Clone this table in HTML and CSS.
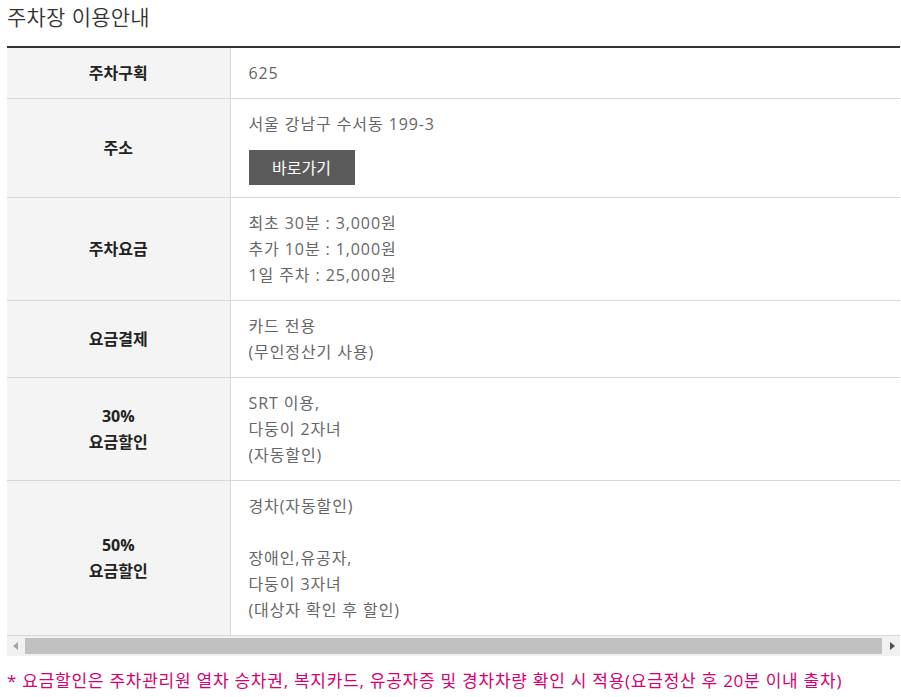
FILE: index.html
```html
<!DOCTYPE html>
<html lang="ko">
	<head>
		<meta charset="UTF-8">
		<meta name="viewport" content="width=device-width, initial-scale=1.0">
		<title>주차장 이용안내</title>
		<link rel="stylesheet" href="styles.css">
	</head>

	<body>
		<div class="wrap">
			<h1 class="page-title">주차장 이용안내</h1>

			<div class="table-box">
				<table class="info-table">
					<tr>
						<th>주차구획</th>
						<td>625</td>
					</tr>
					<tr>
						<th>주소</th>
						<td>
							서울 강남구 수서동 199-3
							<div class="btn-row"><a class="go-btn" href="#">바로가기</a></div>
						</td>
					</tr>
					<tr>
						<th>주차요금</th>
						<td>최초 30분 : 3,000원<br>추가 10분 : 1,000원<br>1일 주차 : 25,000원</td>
					</tr>
					<tr>
						<th>요금결제</th>
						<td>카드 전용<br>(무인정산기 사용)</td>
					</tr>
					<tr>
						<th>30%<br>요금할인</th>
						<td>SRT 이용,<br>다둥이 2자녀<br>(자동할인)</td>
					</tr>
					<tr>
						<th>50%<br>요금할인</th>
						<td>경차(자동할인)<br><br>장애인,유공자,<br>다둥이 3자녀<br>(대상자 확인 후 할인)</td>
					</tr>
				</table>

				<div class="hscroll">
					<span class="arrow arrow-left"></span>
					<div class="thumb"></div>
					<span class="arrow arrow-right"></span>
				</div>
			</div>

			<p class="note">* 요금할인은 주차관리원 열차 승차권, 복지카드, 유공자증 및 경차차량 확인 시 적용(요금정산 후 20분 이내 출차)</p>
		</div>
	</body>
</html>
```

FILE: styles.css
```css
body {
	margin: 0;
	font-family: "Open Sans", "Noto Sans CJK KR", sans-serif;
	color: #666;
	background-color: #fff;
}

.wrap {
	margin: 0 1px 0 7px;
}

.page-title {
	margin: 0 0 14px;
	font-family: "Noto Sans CJK KR", sans-serif;
	font-size: 21px;
	font-weight: 350;
	line-height: 32px;
	color: #333;
	letter-spacing: 0.2px;
}

.table-box {
	border-top: 2px solid #333;
}

.info-table {
	width: 100%;
	border-collapse: collapse;
	font-size: 16px;
	line-height: 26px;
}

.info-table th,
.info-table td {
	border-bottom: 1px solid #d8d8d8;
	padding: 12px 18px;
}

.info-table th {
	width: 223px;
	box-sizing: border-box;
	background-color: #f4f4f4;
	border-right: 1px solid #d8d8d8;
	color: #222;
	font-weight: 700;
	text-align: center;
}

.info-table td {
	text-align: left;
	color: #666;
	font-weight: 400;
	letter-spacing: 0.9px;
}

.btn-row {
	margin-top: 13px;
	line-height: 0;
}

.go-btn {
	display: inline-block;
	width: 106px;
	height: 35px;
	line-height: 35px;
	background-color: #5b5b5b;
	color: #fff;
	text-align: center;
	text-decoration: none;
	font-family: "Noto Sans CJK KR", sans-serif;
	font-size: 16px;
	letter-spacing: 0;
}

.hscroll {
	display: flex;
	align-items: center;
	height: 20px;
	background-color: #f1f1f1;
}

.hscroll .thumb {
	flex: 1;
	height: 16px;
	background-color: #c1c1c1;
	margin: 0 2px;
}

.arrow {
	width: 16px;
	display: flex;
	justify-content: center;
}

.arrow-left::before {
	content: "";
	border-style: solid;
	border-width: 4px 5px 4px 0;
	border-color: transparent #a3a3a3 transparent transparent;
}

.arrow-right::before {
	content: "";
	border-style: solid;
	border-width: 4px 0 4px 5px;
	border-color: transparent transparent transparent #505050;
}

.note {
	margin: 12px 0 0;
	font-size: 17px;
	line-height: 26px;
	color: #d6006f;
	font-weight: 400;
	letter-spacing: 0.75px;
}
```
